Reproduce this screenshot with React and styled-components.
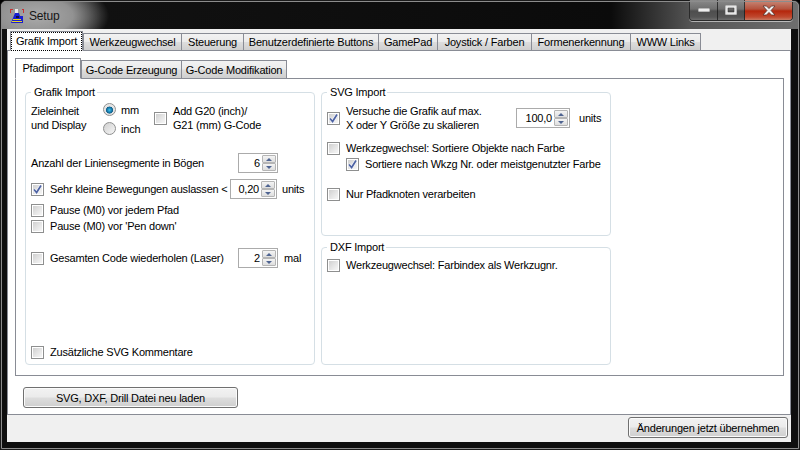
import React from "react";
import styled, { createGlobalStyle } from "styled-components";

const Global = createGlobalStyle`
  html, body { margin: 0; padding: 0; width: 800px; height: 450px; overflow: hidden; background: #000; }
  * { box-sizing: border-box; }
  body { font-family: "Liberation Sans", Arial, sans-serif; font-size: 11px; letter-spacing: -0.2px; color: #000; }
`;

const Window = styled.div`
  width: 800px;
  height: 450px;
  display: flex;
  flex-direction: column;
  border-radius: 6px 6px 0 0;
  border: 1px solid #1a1a1a;
  outline: 1px solid #8c8c8c;
  outline-offset: -2px;
  background: #0e0e0e;
`;

// the black title bar with the glow behind the caption
const TitleBar = styled.div`
  height: 28px;
  flex: none;
  display: flex;
  align-items: flex-start;
  padding-left: 8px;
  background:
    radial-gradient(ellipse 72px 36px at 36px 15px, #aaaaaa 0, #929292 50%, rgba(110, 110, 110, 0) 100%),
    linear-gradient(90deg, #6a6a6a 0, #5a5a5a 8px, #111 100px, #0b0b0b 610px, #555 690px, #6e6e6e 100%);
  border-radius: 5px 5px 0 0;
`;

const AppIcon = styled.svg`
  width: 16px;
  height: 16px;
  margin-top: 7px;
  flex: none;
`;

const TitleText = styled.span`
  margin: 7px 0 0 4px;
  font-size: 12px;
  line-height: 16px;
  color: #161616;
`;

const Controls = styled.div`
  margin-left: auto;
  margin-right: 6px;
  display: flex;
  height: 21px;
  margin-top: -1px;
  border: 1px solid #2a2a2a;
  border-top: 0;
  border-radius: 0 0 4px 4px;
  overflow: hidden;
  box-shadow: 0 1px 0 rgba(255, 255, 255, 0.55);
`;

const ControlButton = styled.div`
  width: ${(p) => p.$w}px;
  display: flex;
  align-items: center;
  justify-content: center;
  border-right: 1px solid rgba(20, 20, 20, 0.7);
  background: ${(p) =>
    p.$close
      ? "linear-gradient(#c98c7c 0, #b4533e 45%, #b5260c 55%, #c0492f 85%, #c77a62 100%)"
      : "linear-gradient(#8a8a8a 0, #6f6f6f 45%, #4e4e4e 55%, #555 85%, #6d6d6d 100%)"};
  &:last-child {
    border-right: 0;
  }
`;

const Client = styled.div`
  flex: 1;
  margin: 0 8px 7px 6px;
  display: flex;
  flex-direction: column;
  background: #f0f0f0;
  min-height: 0;
`;

const TabStrip = styled.div`
  display: flex;
  align-items: flex-end;
  height: ${(p) => p.$h}px;
  padding-left: ${(p) => p.$left}px;
  position: relative;
  z-index: 1;
  margin-bottom: -1px;
  flex: none;
`;

const Tab = styled.div`
  width: ${(p) => p.$w}px;
  height: ${(p) => (p.$active ? p.$h + 2 : p.$h)}px;
  display: flex;
  align-items: center;
  justify-content: center;
  border: 1px solid #898c95;
  border-bottom-color: ${(p) => (p.$active ? "#fff" : "#898c95")};
  margin-right: ${(p) => (p.$active ? 0 : -1)}px;
  background: ${(p) => (p.$active ? "#fff" : "linear-gradient(#f2f2f2 0, #ebebeb 48%, #dddddd 52%, #cfcfcf 100%)")};
  white-space: nowrap;
  flex: none;
  padding-top: ${(p) => (p.$active ? 0 : 1)}px;
`;

const FocusLabel = styled.span`
  outline: ${(p) => (p.$focus ? "1px dotted #000" : "none")};
  padding: 2px 4px;
  line-height: 13px;
`;

const OuterPane = styled.div`
  height: 365px;
  flex: none;
  border: 1px solid #898c95;
  padding: 7px 0 0 7px;
  background: #fff;
  display: flex;
  flex-direction: column;
`;

const InnerPane = styled.div`
  height: 298px;
  width: 769px;
  flex: none;
  border: 1px solid #898c95;
  padding: 7px 0 0 9px;
  display: grid;
  grid-template-columns: 290px 290px;
  column-gap: 6px;
  align-content: start;
  background: #fff;
`;

const Column = styled.div`
  display: flex;
  flex-direction: column;
  gap: 5px;
`;

const Group = styled.fieldset`
  margin: 0;
  padding: 0 5px;
  border: 1px solid #d5dfe5;
  border-radius: 4px;
  min-width: 0;
  height: ${(p) => p.$h}px;
  flex: none;
`;

const GroupTitle = styled.legend`
  margin-left: 0;
  padding: 0 2px 0 3px;
  line-height: 13px;
  height: 13px;
`;

const Row = styled.div`
  display: flex;
  align-items: center;
  height: ${(p) => p.$h || 16}px;
  margin-top: ${(p) => p.$top || 0}px;
  padding-left: ${(p) => p.$indent || 0}px;
  white-space: nowrap;
`;

// fixed width label so the spin box that follows lines up with the reference
const Label = styled.span`
  width: ${(p) => p.$w}px;
  flex: none;
`;

const Box = styled.span`
  width: 13px;
  height: 13px;
  flex: none;
  border: 1px solid #8e8f8f;
  background: #fff;
  padding: 1px;
  display: block;
  margin-right: 6px;
`;

const BoxFill = styled.span`
  display: block;
  width: 9px;
  height: 9px;
  background: linear-gradient(135deg, #d0d0d0 0, #e4e4e4 50%, #f6f6f6 100%);
  position: relative;
`;

const CheckMark = styled.svg`
  position: absolute;
  left: -1px;
  top: -1px;
  width: 11px;
  height: 11px;
`;

const Check = ({ checked }) => (
  <Box>
    <BoxFill>
      {checked && (
        <CheckMark viewBox="0 0 11 11">
          <path d="M2 5.5 L4.6 8.5 L9 1.5" fill="none" stroke="#f4f6fb" strokeWidth="3" />
          <path d="M2 5.5 L4.6 8.5 L9 1.5" fill="none" stroke="#4d62a3" strokeWidth="1.7" />
        </CheckMark>
      )}
    </BoxFill>
  </Box>
);

const RadioDot = styled.span`
  width: 13px;
  height: 13px;
  flex: none;
  border-radius: 50%;
  border: 1px solid #8e8f8f;
  background: ${(p) =>
    p.$on
      ? "radial-gradient(circle at 50% 55%, #3ec6f0 0, #1a7fb0 26%, #0f5f8a 40%, #e0e0e0 46%, #f4f4f4 100%)"
      : "linear-gradient(135deg, #d0d0d0, #f6f6f6)"};
  margin-right: 5px;
  display: block;
`;

const SpinBox = styled.div`
  width: ${(p) => p.$w}px;
  height: 20px;
  border: 1px solid #ababab;
  display: flex;
  align-items: center;
  justify-content: flex-end;
  flex: none;
  padding-right: 1px;
  margin-right: ${(p) => p.$right || 0}px;
  background: #fff;
`;

const SpinValue = styled.span`
  margin-right: 2px;
`;

const SpinButtons = styled.div`
  width: 14px;
  height: 16px;
  display: flex;
  flex-direction: column;
  flex: none;
`;

const SpinArrow = styled.div`
  flex: 1;
  border: 1px solid #b5b5b5;
  border-radius: 1px;
  background: linear-gradient(#f4f4f4, #dedede);
  display: flex;
  align-items: center;
  justify-content: center;
  &::before {
    content: "";
    width: 0;
    height: 0;
    border-left: 3px solid transparent;
    border-right: 3px solid transparent;
    ${(p) => (p.$down ? "border-top: 3px solid #4f6491;" : "border-bottom: 3px solid #4f6491;")}
  }
`;

const Spin = ({ value, w, right }) => (
  <SpinBox $w={w} $right={right}>
    <SpinValue>{value}</SpinValue>
    <SpinButtons>
      <SpinArrow />
      <SpinArrow $down />
    </SpinButtons>
  </SpinBox>
);

const TwoLines = styled.div`
  line-height: 14px;
  white-space: nowrap;
  width: ${(p) => (p.$w ? `${p.$w}px` : "auto")};
  flex: none;
`;

const UnitGrid = styled.div`
  display: grid;
  grid-template-columns: 72px 51px auto;
  margin-top: 5px;
  height: 28px;
`;

const RadioColumn = styled.div`
  display: flex;
  flex-direction: column;
  gap: 6px;
  margin-top: -1px;
`;

const RadioRow = styled.div`
  display: flex;
  align-items: center;
  height: 13px;
`;

const ReloadArea = styled.div`
  padding: 11px 0 0 8px;
`;

const PushButton = styled.div`
  width: ${(p) => p.$w}px;
  height: 21px;
  display: flex;
  align-items: center;
  justify-content: center;
  border: 1px solid #707070;
  border-radius: 3px;
  box-shadow: inset 0 0 0 1px #fbfbfb;
  background: linear-gradient(#f2f2f2 0, #ebebeb 48%, #dddddd 52%, #cfcfcf 100%);
  white-space: nowrap;
`;

const Footer = styled.div`
  flex: 1;
  display: flex;
  justify-content: flex-end;
  align-items: flex-start;
  padding: 2px 3px 0 0;
`;

const outerTabs = [
  ["Grafik Import", 73],
  ["Werkzeugwechsel", 99],
  ["Steuerung", 63],
  ["Benutzerdefinierte Buttons", 136],
  ["GamePad", 60],
  ["Joystick / Farben", 95],
  ["Formenerkennung", 100],
  ["WWW Links", 71],
];

const innerTabs = [
  ["Pfadimport", 66],
  ["G-Code Erzeugung", 101],
  ["G-Code Modifikation", 106],
];

export default function App() {
  return (
    <>
      <Global />
      <Window>
        <TitleBar>
          <AppIcon viewBox="0 0 16 16">
            <path d="M1 1h3v1H2v3H1zM13 1h2v4h-1V2h-1z" fill="#c83232" />
            <path d="M6 1h3v4H6z" fill="#e8e8e8" />
            <path d="M2 15 L6 5 H10 L11 8 H14 V15 Z" fill="#1a1fd0" />
            <path d="M4 11h8v1H4zM3 13h10v1H3z" fill="#ecd81c" />
            <path d="M7 8h3v2H7z" fill="#101040" />
          </AppIcon>
          <TitleText>Setup</TitleText>
          <Controls>
            <ControlButton $w={28}>
              <svg width="12" height="4" viewBox="0 0 12 4">
                <rect width="12" height="4" fill="#eee" stroke="#333" strokeWidth="0.6" />
              </svg>
            </ControlButton>
            <ControlButton $w={27}>
              <svg width="12" height="10" viewBox="0 0 12 10">
                <path fillRule="evenodd" d="M0 0h12v10H0zM3 3v4h6V3z" fill="#e6e6e6" stroke="#333" strokeWidth="0.5" />
              </svg>
            </ControlButton>
            <ControlButton $w={47} $close>
              <svg width="14" height="11" viewBox="0 0 14 11">
                <path d="M1 1h3.5L7 3.6 9.5 1H13L9 5.5 13 10H9.5L7 7.4 4.5 10H1L5 5.5Z" fill="#f1f1f1" stroke="#4a2a22" strokeWidth="0.7" />
              </svg>
            </ControlButton>
          </Controls>
        </TitleBar>
        <Client>
          <TabStrip $h={22} $left={3}>
            {outerTabs.map(([label, w], i) => (
              <Tab key={label} $w={w} $h={18} $active={i === 0}>
                <FocusLabel $focus={i === 0}>{label}</FocusLabel>
              </Tab>
            ))}
          </TabStrip>
          <OuterPane>
            <TabStrip $h={21} $left={0}>
              {innerTabs.map(([label, w], i) => (
                <Tab key={label} $w={w} $h={19} $active={i === 0}>
                  <FocusLabel>{label}</FocusLabel>
                </Tab>
              ))}
            </TabStrip>
            <InnerPane>
              <Column>
                <Group $h={279}>
                  <GroupTitle>Grafik Import</GroupTitle>
                  <UnitGrid>
                    <TwoLines>
                      Zieleinheit
                      <br />
                      und Display
                    </TwoLines>
                    <RadioColumn>
                      <RadioRow>
                        <RadioDot $on />
                        mm
                      </RadioRow>
                      <RadioRow>
                        <RadioDot />
                        inch
                      </RadioRow>
                    </RadioColumn>
                    <Row $h={28}>
                      <Check />
                      <TwoLines>
                        Add G20 (inch)/
                        <br />
                        G21 (mm) G-Code
                      </TwoLines>
                    </Row>
                  </UnitGrid>
                  <Row $h={20} $top={21}>
                    <Label $w={207}>Anzahl der Liniensegmente in Bögen</Label>
                    <Spin value="6" w={40} />
                  </Row>
                  <Row $h={20} $top={6}>
                    <Check checked />
                    <Label $w={180}>Sehr kleine Bewegungen auslassen &lt;</Label>
                    <Spin value="0,20" w={47} right={5} />
                    units
                  </Row>
                  <Row $top={3}>
                    <Check />
                    Pause (M0) vor jedem Pfad
                  </Row>
                  <Row>
                    <Check />
                    Pause (M0) vor 'Pen down'
                  </Row>
                  <Row $h={20} $top={14}>
                    <Check />
                    <Label $w={188}>Gesamten Code wiederholen (Laser)</Label>
                    <Spin value="2" w={40} right={6} />
                    mal
                  </Row>
                  <Row $top={76}>
                    <Check />
                    Zusätzliche SVG Kommentare
                  </Row>
                </Group>
              </Column>
              <Column>
                <Group $h={150}>
                  <GroupTitle>SVG Import</GroupTitle>
                  <Row $h={28} $top={5}>
                    <Check checked />
                    <TwoLines $w={170}>
                      Versuche die Grafik auf max.
                      <br />
                      X oder Y Größe zu skalieren
                    </TwoLines>
                    <Spin value="100,0" w={54} right={9} />
                    units
                  </Row>
                  <Row $top={8}>
                    <Check />
                    Werkzegwechsel: Sortiere Objekte nach Farbe
                  </Row>
                  <Row $indent={19}>
                    <Check checked />
                    Sortiere nach Wkzg Nr. oder meistgenutzter Farbe
                  </Row>
                  <Row $top={14}>
                    <Check />
                    Nur Pfadknoten verarbeiten
                  </Row>
                </Group>
                <Group $h={124}>
                  <GroupTitle>DXF Import</GroupTitle>
                  <Row $top={3}>
                    <Check />
                    Werkzeugwechsel: Farbindex als Werkzugnr.
                  </Row>
                </Group>
              </Column>
            </InnerPane>
            <ReloadArea>
              <PushButton $w={215}>SVG, DXF, Drill Datei neu laden</PushButton>
            </ReloadArea>
          </OuterPane>
          <Footer>
            <PushButton $w={160}>Änderungen jetzt übernehmen</PushButton>
          </Footer>
        </Client>
      </Window>
    </>
  );
}
